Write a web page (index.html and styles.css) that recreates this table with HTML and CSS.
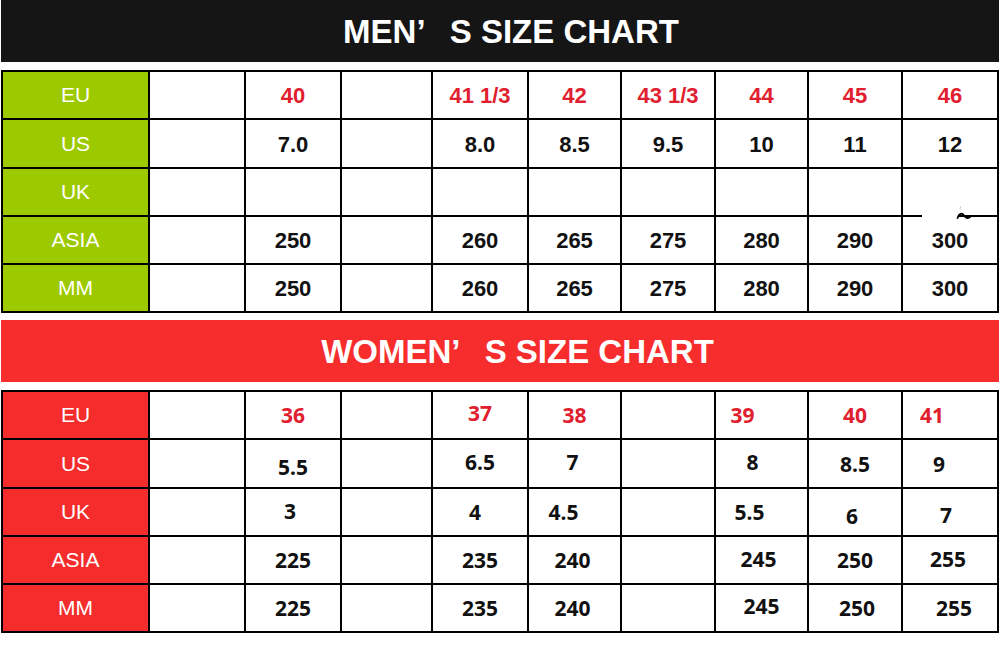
FILE: index.html
```html
<!DOCTYPE html>
<html lang="en">
<head>
<meta charset="utf-8">
<title>Size Chart</title>
<link rel="stylesheet" href="styles.css">
</head>
<body>
<div class="page">
  <h1 class="banner banner-men"><span class="banner-text">MEN<span class="apos">’</span> S SIZE CHART</span></h1>
  <div class="grid men">
    <div class="cell lab">EU</div><div class="cell"></div><div class="cell red">40</div><div class="cell"></div><div class="cell red">41 1/3</div><div class="cell red">42</div><div class="cell red">43 1/3</div><div class="cell red">44</div><div class="cell red">45</div><div class="cell red">46</div>
    <div class="cell lab">US</div><div class="cell"></div><div class="cell">7.0</div><div class="cell"></div><div class="cell">8.0</div><div class="cell">8.5</div><div class="cell">9.5</div><div class="cell">10</div><div class="cell">11</div><div class="cell">12</div>
    <div class="cell lab">UK</div><div class="cell"></div><div class="cell"></div><div class="cell"></div><div class="cell"></div><div class="cell"></div><div class="cell"></div><div class="cell"></div><div class="cell"></div><div class="cell"></div>
    <div class="cell lab">ASIA</div><div class="cell"></div><div class="cell">250</div><div class="cell"></div><div class="cell">260</div><div class="cell">265</div><div class="cell">275</div><div class="cell">280</div><div class="cell">290</div><div class="cell">300</div>
    <div class="cell lab">MM</div><div class="cell"></div><div class="cell">250</div><div class="cell"></div><div class="cell">260</div><div class="cell">265</div><div class="cell">275</div><div class="cell">280</div><div class="cell">290</div><div class="cell">300</div>
    <svg class="scribble" width="60" height="24" viewBox="0 0 60 24" aria-hidden="true">
      <rect x="0" y="7" width="37" height="5" fill="#fff"/>
      <path d="M38 3.5 L38.6 0.5" stroke="#c8c8c8" stroke-width="1" fill="none"/>
      <path d="M35.5 12 C37 7.5 40 6.5 42 9.5 S46 13 49 10" stroke="#000" stroke-width="1.8" fill="none" stroke-linecap="round"/>
    </svg>
  </div>

  <h1 class="banner banner-women"><span class="banner-text">WOMEN<span class="apos">’</span> S SIZE CHART</span></h1>
  <div class="grid women">
    <div class="cell lab">EU</div><div class="cell"></div><div class="cell red">36</div><div class="cell"></div><div class="cell red su-3">37</div><div class="cell red">38</div><div class="cell"></div><div class="cell red sl-19">39</div><div class="cell red">40</div><div class="cell red sl-18">41</div>
    <div class="cell lab">US</div><div class="cell"></div><div class="cell sd-3">5.5</div><div class="cell"></div><div class="cell su-2">6.5</div><div class="cell su-2 sl-2">7</div><div class="cell"></div><div class="cell su-2 sl-9">8</div><div class="cell">8.5</div><div class="cell sl-11">9</div>
    <div class="cell lab">UK</div><div class="cell"></div><div class="cell su-2 sl-3">3</div><div class="cell"></div><div class="cell sl-5">4</div><div class="cell sl-11">4.5</div><div class="cell"></div><div class="cell sl-12">5.5</div><div class="cell sd-3 sl-3">6</div><div class="cell sd-2 sl-4">7</div>
    <div class="cell lab">ASIA</div><div class="cell"></div><div class="cell">225</div><div class="cell"></div><div class="cell">235</div><div class="cell sl-2">240</div><div class="cell"></div><div class="cell su-2 sl-3">245</div><div class="cell">250</div><div class="cell su-2 sl-2">255</div>
    <div class="cell lab">MM</div><div class="cell"></div><div class="cell">225</div><div class="cell"></div><div class="cell">235</div><div class="cell sl-2">240</div><div class="cell"></div><div class="cell su-3">245</div><div class="cell sr-2">250</div><div class="cell sr-4">255</div>
  </div>
</div>
</body>
</html>
```
FILE: styles.css
```css
html, body {
  margin: 0;
  padding: 0;
  background: #ffffff;
}

.page {
  width: 1000px;
  height: 647px;
  overflow: hidden;
  display: flex;
  flex-direction: column;
  font-family: "Liberation Sans", Arial, sans-serif;
}

.banner {
  margin: 0 1px 0 1px;
  height: 62px;
  display: flex;
  align-items: center;
  justify-content: center;
  color: #ffffff;
  font-family: "Liberation Sans", Arial, sans-serif;
  font-weight: bold;
  font-size: 33px;
  letter-spacing: 0;
  white-space: pre;
}

.banner-men {
  background: #151515;
  padding-left: 22px;
}

.banner-women {
  background: #f72d2d;
  margin-top: 7px;
  padding-left: 35px;
}

.banner-text {
  display: inline-block;
  padding-top: 1px;
}

.apos {
  margin-right: 15px;
}

.grid {
  position: relative;
  margin: 8px 1px 0 1px;
  width: 998px;
  box-sizing: border-box;
  padding: 2px;
  background: #000000;
  display: grid;
  grid-template-columns: 145px 94px 94px 89px 94px 91px 92px 91px 92px 94px;
  grid-template-rows: 46px 47px 46px 46px 46px;
  gap: 2px;
}

.cell {
  background: #ffffff;
  display: flex;
  align-items: center;
  justify-content: center;
  box-sizing: border-box;
  color: #111111;
  font-weight: bold;
  font-size: 22px;
  white-space: pre;
}

.men .cell {
  font-family: "Liberation Sans", Arial, sans-serif;
  padding-top: 2px;
}

.women .cell {
  font-family: "Noto Sans", "Open Sans", sans-serif;
  font-size: 21px;
  padding-top: 0;
}

.grid .cell.lab {
  font-family: "Liberation Sans", Arial, sans-serif;
  font-weight: normal;
  font-size: 21px;
  color: #ffffff;
  padding-top: 0;
}

.men .lab {
  background: #9dc900;
}

.women .lab {
  background: #f42c2c;
}

.cell.red {
  color: #e1202f;
}

/* hand nudges for the uneven placement of the women's figures */
.women .su-2 { padding-bottom: 3px; }
.women .su-3 { padding-bottom: 5px; }
.women .sd-2 { padding-top: 5px; }
.women .sd-3 { padding-top: 7px; }
.sl-2 { padding-right: 4px; }
.sl-3 { padding-right: 6px; }
.sl-4 { padding-right: 8px; }
.sl-5 { padding-right: 10px; }
.sl-9 { padding-right: 18px; }
.sl-11 { padding-right: 22px; }
.sl-12 { padding-right: 24px; }
.sl-18 { padding-right: 36px; }
.sl-19 { padding-right: 38px; }
.sr-2 { padding-left: 4px; }
.sr-4 { padding-left: 8px; }

/* scan artefact over the UK / ASIA line in the last column */
.scribble {
  position: absolute;
  left: 921px;
  top: 136px;
}
```
